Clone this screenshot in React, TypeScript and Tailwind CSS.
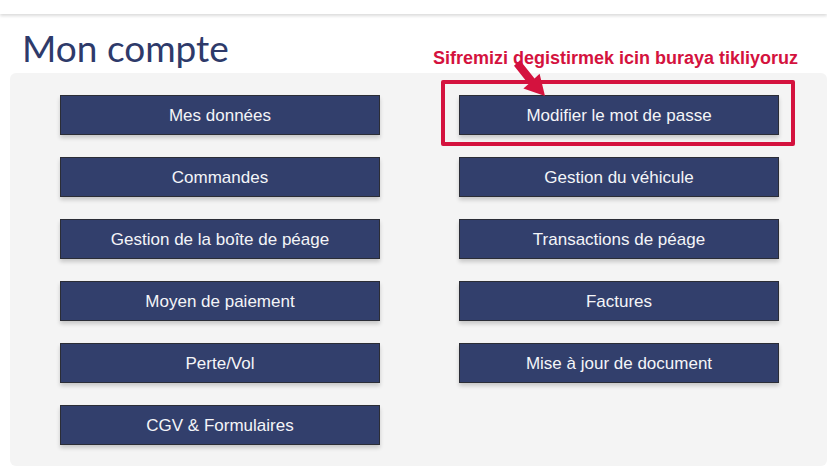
const left = [
  "Mes données",
  "Commandes",
  "Gestion de la boîte de péage",
  "Moyen de paiement",
  "Perte/Vol",
  "CGV & Formulaires",
];

const right = [
  "Modifier le mot de passe",
  "Gestion du véhicule",
  "Transactions de péage",
  "Factures",
  "Mise à jour de document",
];

function AccountButton({ label }: { label: string }) {
  return (
    <button className="flex h-[40px] w-[320px] items-center justify-center border border-[#2b2d36] bg-[#323f6c] pt-[1px] text-[17px] text-[#f4f5f8] shadow-[0_3px_4px_rgba(0,0,0,0.18)] [font-family:'Liberation_Sans',Arial,sans-serif]">
      {label}
    </button>
  );
}

export default function App() {
  return (
    <div className="relative min-h-[467px] w-[827px] overflow-hidden bg-white">
      <div className="h-[14px] bg-white shadow-[0_2px_3px_rgba(0,0,0,0.14)]" />

      <h1 className="pl-[22px] pt-[12px] text-[37px] leading-[44px] text-[#2e3a6a] [font-family:Lato,'Open_Sans',sans-serif]">
        Mon compte
      </h1>

      <div className="relative mt-[3px] ml-[10px] rounded-md bg-[#f4f4f4] pb-[21px] pl-[50px] pt-[22px]">
        <div className="grid grid-cols-[320px_320px] gap-x-[79px]">
          <div className="flex flex-col gap-[22px]">
            {left.map((l) => (
              <AccountButton key={l} label={l} />
            ))}
          </div>
          <div className="flex flex-col gap-[22px]">
            {right.map((l) => (
              <AccountButton key={l} label={l} />
            ))}
          </div>
        </div>

        {/* annotation box */}
        <div className="pointer-events-none absolute left-[431px] top-[7px] h-[66px] w-[354px] rounded-[2px] border-[4px] border-[#d4123e]" />
      </div>

      <p className="absolute left-[433px] top-[48px] text-[18px] font-bold leading-[20px] text-[#d4123e] [font-family:'Liberation_Sans',Arial,sans-serif]">
        Sifremizi degistirmek icin buraya tikliyoruz
      </p>

      <svg
        className="absolute left-[505px] top-[55px]"
        width="45"
        height="45"
        viewBox="0 0 45 45"
      >
        <polygon
          fill="#d4123e"
          points="15,5.3 29.5,23.5 34.6,18.8 40,41 18.4,33.6 23.5,28.9 9,10.7"
        />
      </svg>
    </div>
  );
}
